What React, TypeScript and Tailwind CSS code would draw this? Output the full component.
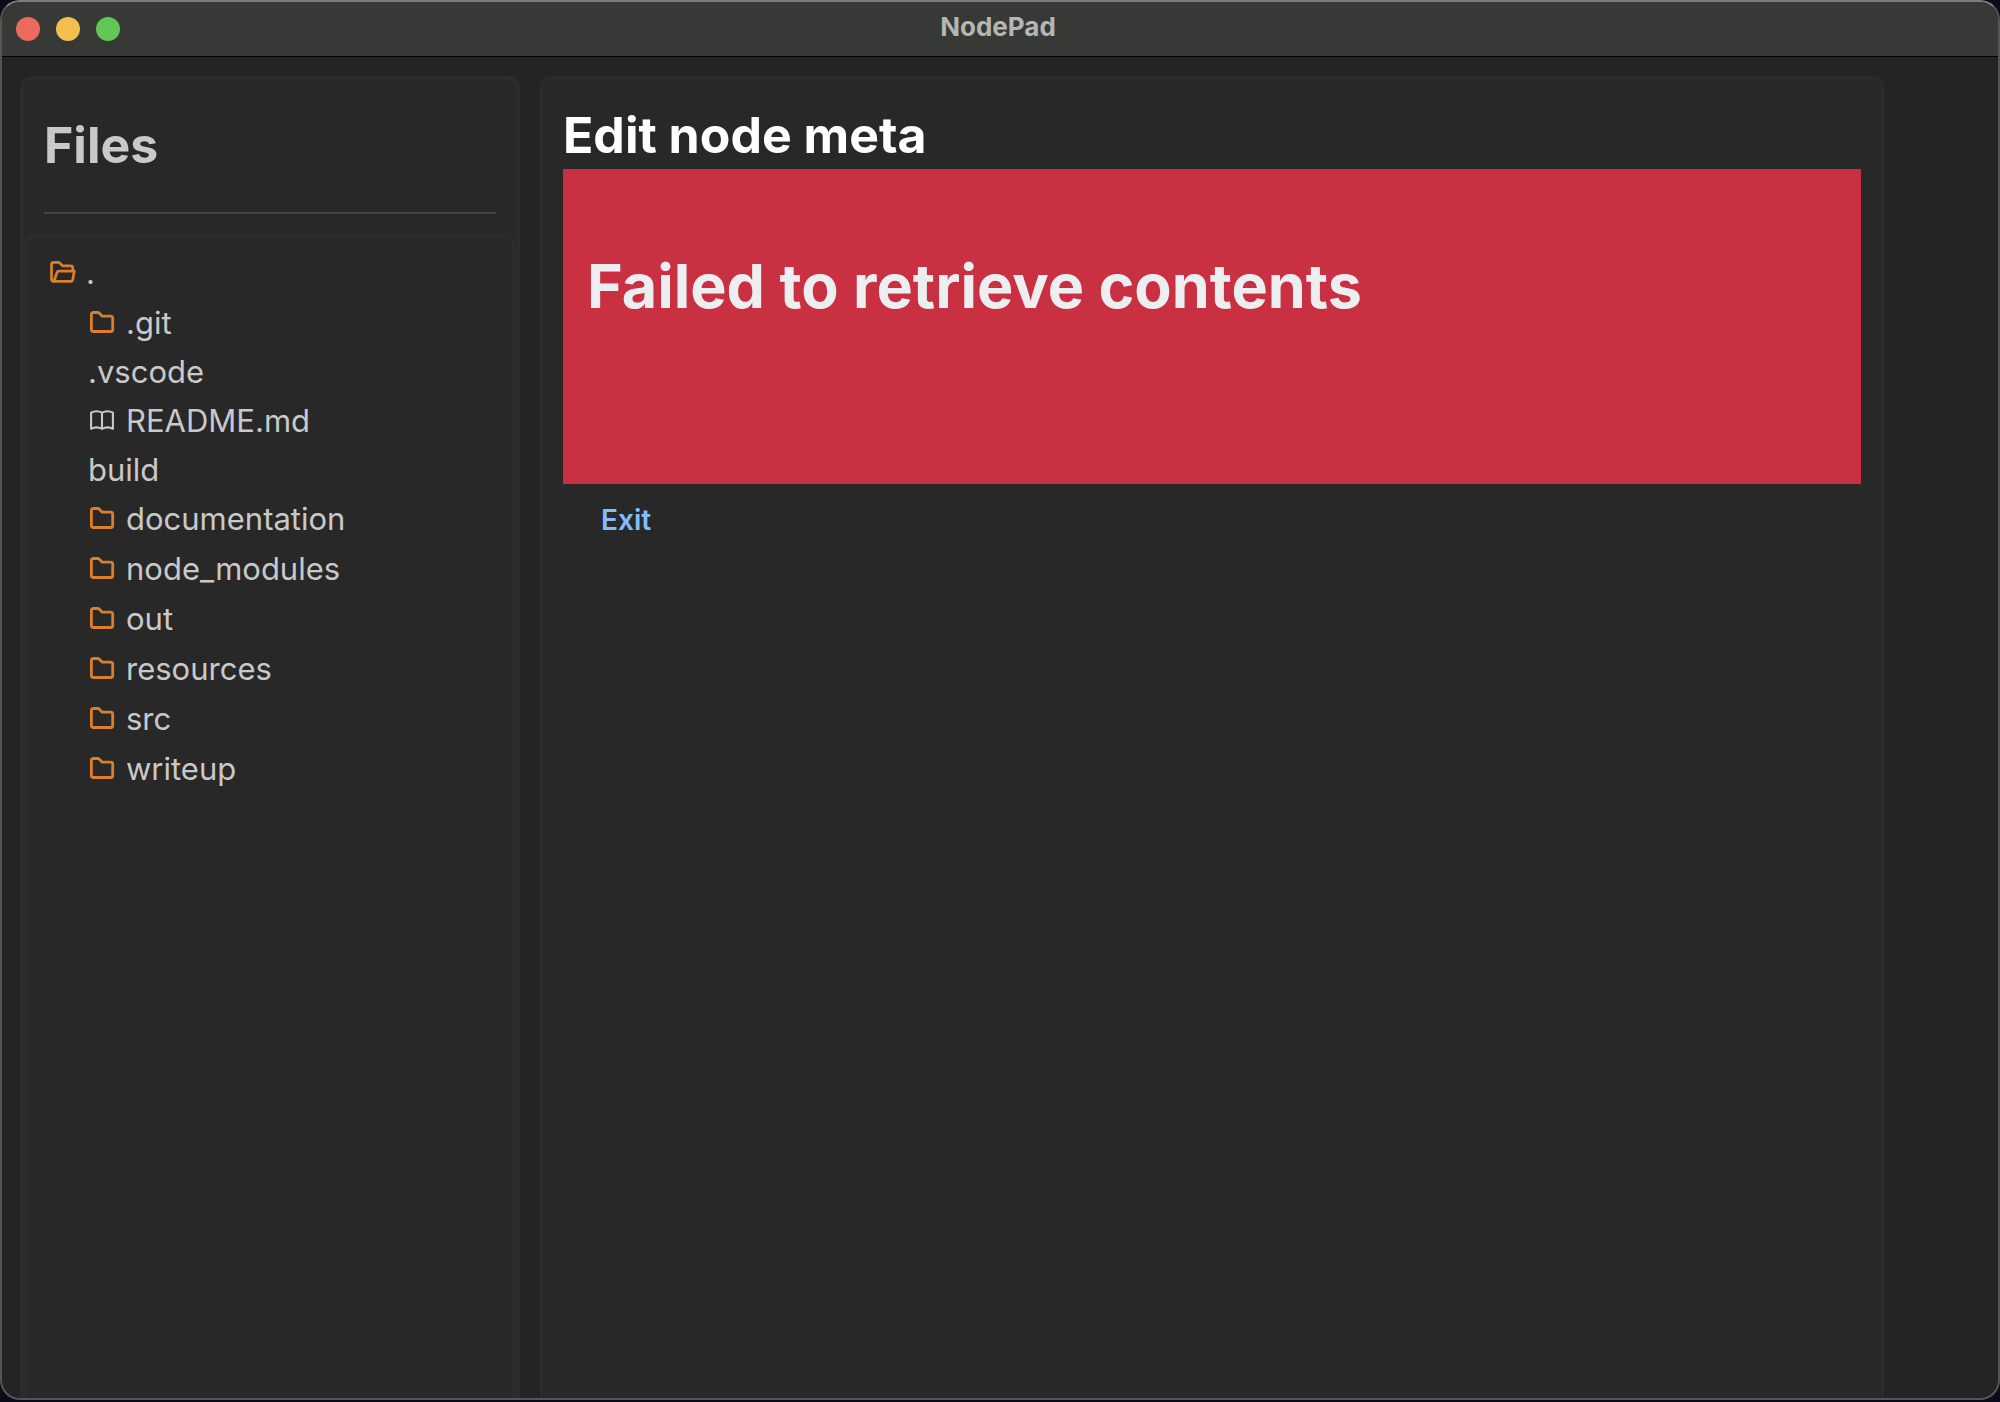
import React from "react";

type IconName = "open" | "folder" | "book";

type Entry = { name: string; icon?: IconName };

const entries: Entry[] = [
  { name: ".git", icon: "folder" },
  { name: ".vscode" },
  { name: "README.md", icon: "book" },
  { name: "build" },
  { name: "documentation", icon: "folder" },
  { name: "node_modules", icon: "folder" },
  { name: "out", icon: "folder" },
  { name: "resources", icon: "folder" },
  { name: "src", icon: "folder" },
  { name: "writeup", icon: "folder" },
];

function Icon({ name }: { name: IconName }) {
  if (name === "open") {
    return (
      <svg viewBox="0 0 26 26" className="size-[26px] shrink-0 text-[#dc7f2c]" fill="none" stroke="currentColor" strokeWidth="2.7" strokeLinejoin="round" aria-hidden="true">
        <path d="M4 21.300 H3.800 Q1.500 21.300 1.500 19.200 V4.400 Q1.500 2.300 3.800 2.300 H8 Q9 2.300 9.700 3 L12.600 5.900 H20.700 Q22.800 5.900 22.800 8 V11" />
        <path d="M4 21.300 L7.100 12.200 Q7.600 11.100 8.800 11.100 H24.300 L22.800 19.600 Q22.500 21.300 20.800 21.300 Z" />
      </svg>
    );
  }
  if (name === "folder") {
    return (
      <svg viewBox="0 0 26 26" className="size-[26px] shrink-0 text-[#dc7f2c]" fill="none" stroke="currentColor" strokeWidth="2.8" strokeLinejoin="round" aria-hidden="true">
        <path d="M3.400 2.500 H7.600 Q8.600 2.500 9.300 3.200 L12.300 6.200 H20.600 Q22.700 6.200 22.700 8.300 V19.400 Q22.700 21.500 20.600 21.500 H3.400 Q1.400 21.500 1.400 19.400 V4.600 Q1.400 2.500 3.400 2.500 Z" />
      </svg>
    );
  }
  return (
    <svg viewBox="0 0 26 26" className="size-[26px] shrink-0 text-[#c9c9c9]" fill="none" stroke="currentColor" strokeWidth="2.1" strokeLinejoin="round" strokeLinecap="round" aria-hidden="true">
      <path d="M12 4.600 Q6.500 1.800 1.100 4.600 V20.800 Q6.500 18 12 20.800 Q17.500 18 22.900 20.800 V4.600 Q17.500 1.800 12 4.600 V20.800" />
    </svg>
  );
}

function Row({ entry }: { entry: Entry }) {
  return (
    <button
      type="button"
      className={
        entry.icon
          ? "flex h-[50px] w-full items-center gap-[10px] pl-[2px] text-left"
          : "flex h-[48px] w-full items-center text-left"
      }
    >
      {entry.icon && <Icon name={entry.icon} />}
      <span>{entry.name}</span>
    </button>
  );
}

export default function App() {
  return (
    <div className="flex h-screen flex-col bg-[#0c0a18] pb-[2px] font-['Inter',sans-serif]">
      <div className="flex min-h-0 flex-1 flex-col overflow-hidden rounded-[20px] border-2 border-[#555555] border-t-[#7c7e7c] bg-[#242424]">
        <header className="grid h-[55px] shrink-0 grid-cols-[1fr_auto_1fr] items-center border-b border-black bg-[#373937] pr-[18px] pl-[14px]">
          <div className="flex gap-4">
            <button type="button" aria-label="Close" className="size-6 rounded-full bg-[#ed6a5f]" />
            <button type="button" aria-label="Minimize" className="size-6 rounded-full bg-[#f5bf4f]" />
            <button type="button" aria-label="Zoom" className="size-6 rounded-full bg-[#62c655]" />
          </div>
          <p className="pb-1 text-[26px] leading-8 font-bold text-[#b4b6b4]">NodePad</p>
        </header>
        <div className="flex min-h-0 flex-1 gap-5 pt-[19px] pr-[114px] pl-[18px]">
          <aside className="flex w-[500px] shrink-0 flex-col rounded-t-xl border-4 border-b-0 border-[#2c2c2c] bg-[#282828] text-[#c9c9c9]">
            <h1 className="mx-5 border-b-2 border-[#444444] pt-[33px] pb-[35px] text-[50px] leading-[64px] font-bold">Files</h1>
            <nav aria-label="Files" className="mt-5 flex-1 rounded-t-xl border-4 border-b-0 border-[#2c2c2c] px-5 pt-[10px] text-[31px]">
              <Row entry={{ name: ".", icon: "open" }} />
              <ul className="pl-10">
                {entries.map((entry) => (
                  <li key={entry.name}>
                    <Row entry={entry} />
                  </li>
                ))}
              </ul>
            </nav>
          </aside>
          <main className="min-w-0 flex-1 rounded-t-xl border-[3px] border-b-0 border-[#2c2c2c] bg-[#282828] px-5 pt-[24px]">
            <h2 className="pb-[2px] text-[50px] leading-[64px] font-bold text-white">Edit node meta</h2>
            <div role="alert" className="h-[315px] bg-[#c93142] px-6 pt-[77px]">
              <p className="text-[61px] leading-20 font-bold text-[#edeef0]">Failed to retrieve contents</p>
            </div>
            <button type="button" className="mt-4 px-[38px] text-[28px] leading-10 font-semibold text-[#83bdff]">Exit</button>
          </main>
        </div>
      </div>
    </div>
  );
}
